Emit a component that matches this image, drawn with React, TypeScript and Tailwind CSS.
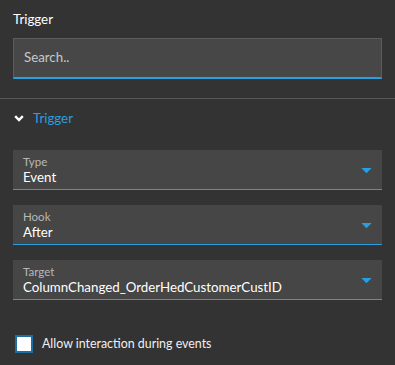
import React, { useState } from 'react';

const fields = [
  { label: 'Type', value: 'Event' },
  { label: 'Hook', value: 'After' },
  { label: 'Target', value: 'ColumnChanged_OrderHedCustomerCustID' },
];

function SelectField({ label, value }: { label: string; value: string }) {
  return (
    <div className="mx-[13px] h-[40px] bg-[#464646] border-b border-[#2a9ee0] flex items-center pl-[10px] pr-[10px]">
      <div className="flex-1 flex flex-col leading-none">
        <span className="text-[11.5px] text-[#b8b8b8] mt-[2px]">{label}</span>
        <span className="text-[13.3px] text-white mt-[4px]">{value}</span>
      </div>
      <svg width="11" height="6" viewBox="0 0 12 7" className="mt-[3px]">
        <polygon points="0,0 12,0 6,6" fill="#2a9ee0" />
      </svg>
    </div>
  );
}

export default function App() {
  const [checked, setChecked] = useState(false);

  return (
    <div className="w-[395px] h-[365px] bg-[#333333] text-white overflow-hidden" style={{ fontFamily: 'Lato, "Open Sans", sans-serif' }}>
      <div className="px-[13px] pt-[13px] text-[13.3px] leading-none">Trigger</div>
      <div className="mx-[13px] mt-[12px] h-[41px] bg-[#474747] border border-[#5c5c5c] border-b-2 border-b-[#2a9ee0] flex items-center px-[10px]">
        <input
          placeholder="Search.."
          className="bg-transparent outline-none w-full text-[13.3px] text-white placeholder:text-[#c8c8c8]"
        />
      </div>
      <div className="mt-[19px] border-t border-[#575757]" />
      <div className="flex items-center gap-[9px] pl-[14px] pt-[13px]">
        <svg width="10" height="7" viewBox="0 0 10 7">
          <polyline points="1.2,1.2 5,5 8.8,1.2" fill="none" stroke="white" strokeWidth="2.4" />
        </svg>
        <span className="text-[13.3px] text-[#2a9ee0] leading-none">Trigger</span>
      </div>
      <div className="mt-[24px] flex flex-col gap-[15px]">
        {fields.map((f) => (
          <SelectField key={f.label} label={f.label} value={f.value} />
        ))}
      </div>
      <label className="flex items-center gap-[9px] pl-[15px] mt-[35px] cursor-pointer">
        <span
          onClick={() => setChecked(!checked)}
          className="w-[18px] h-[18px] bg-white border-2 border-[#1c6ea4] inline-block"
        />
        <span className="text-[12.4px] text-[#f0f0f0]">Allow interaction during events</span>
      </label>
    </div>
  );
}
